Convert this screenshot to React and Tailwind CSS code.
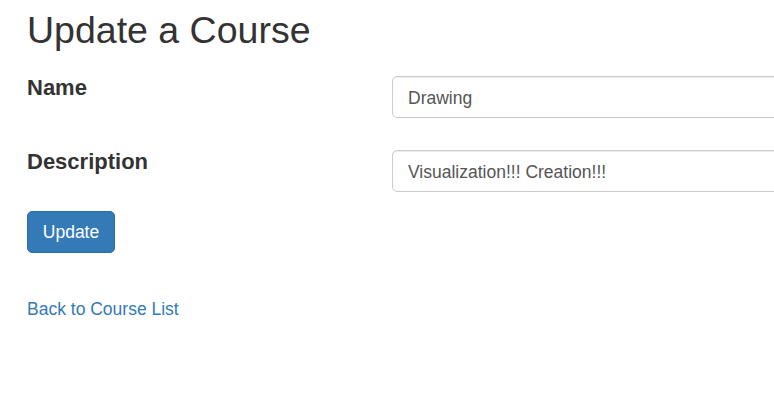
import React from 'react';

const App = () => {
  return (
    <div className="w-[774px] h-[403px] overflow-hidden bg-white text-[#333] font-['Liberation_Sans',Arial,sans-serif]">
      <div className="pl-[27px]">
        {/* Title */}
        <h1 className="mt-[10px] text-[37.5px] leading-[1.1] font-normal">Update a Course</h1>

        {/* Form */}
        <form className="mt-[25px]" onSubmit={(e) => e.preventDefault()}>
          <div className="flex items-start">
            <label className="w-[365px] shrink-0 text-[22px] leading-[1.1] font-bold">Name</label>
            <input
              type="text"
              defaultValue="Drawing"
              className="w-[420px] shrink-0 h-[42px] px-[15px] pt-[2px] text-[17.5px] text-[#555] border border-[#ccc] rounded-[5px] shadow-[inset_0_1px_1px_rgba(0,0,0,0.075)] outline-none"
            />
          </div>

          <div className="flex items-start mt-[32px]">
            <label className="w-[365px] shrink-0 text-[22px] leading-[1.1] font-bold">Description</label>
            <input
              type="text"
              defaultValue="Visualization!!! Creation!!!"
              className="w-[420px] shrink-0 h-[42px] px-[15px] pt-[2px] text-[17.5px] text-[#555] border border-[#ccc] rounded-[5px] shadow-[inset_0_1px_1px_rgba(0,0,0,0.075)] outline-none"
            />
          </div>

          <button
            type="submit"
            className="mt-[19px] w-[88px] h-[42px] text-[17.5px] text-white bg-[#337ab7] border border-[#2e6da4] rounded-[5px]"
          >
            Update
          </button>
        </form>

        <a href="#" className="block mt-[44px] w-fit text-[17.5px] leading-[25px] text-[#337ab7]">
          Back to Course List
        </a>
      </div>
    </div>
  );
};

export default App;
